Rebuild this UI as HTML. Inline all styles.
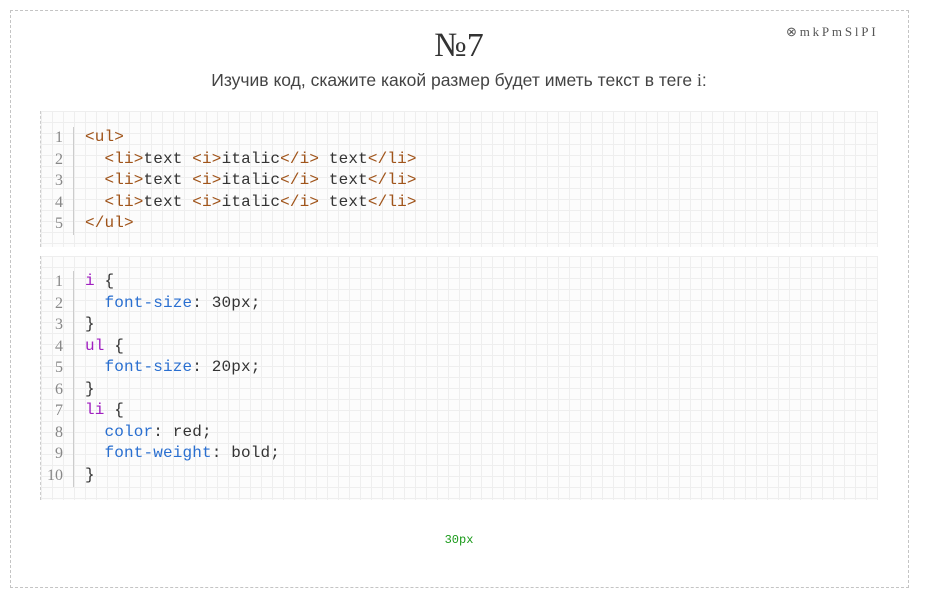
<!DOCTYPE html>
<html><head><meta charset="utf-8"><style>
html,body{margin:0;padding:0;background:#fff;}
body{width:928px;height:599px;position:relative;overflow:hidden;font-family:"Liberation Sans",sans-serif;}
.frame{position:absolute;left:10px;top:10px;width:897px;height:576px;border:1px dashed #c4c4c4;}
.num{position:absolute;left:0;width:918px;top:27px;text-align:center;font-family:"Liberation Serif",serif;font-size:34px;color:#333;}
.q{position:absolute;left:0;width:918px;top:70px;text-align:center;font-size:17.5px;color:#444;}
.id{position:absolute;left:786px;top:24px;font-family:"Liberation Serif",serif;font-size:13px;color:#555;letter-spacing:2.8px;}
.code{position:absolute;left:40px;width:837px;border-left:1px dashed #ccc;
background-color:#fcfcfc;
background-image:linear-gradient(#eee 1px,transparent 1px),linear-gradient(90deg,#eee 1px,transparent 1px);
background-size:11px 11px;font-family:"Liberation Mono",monospace;font-size:16px;letter-spacing:0.15px;}
.code .ln{position:absolute;left:0;width:32px;border-right:1px solid #ccc;text-align:right;color:#888;font-family:"Liberation Serif",serif;font-size:16px;letter-spacing:0;}
.code .ln div,.code .tx div{height:21.5px;line-height:21.5px;}
.code .ln div{padding-right:10px;}
.code .tx{position:absolute;left:44px;color:#333;white-space:pre;}
.t{color:#a0541a}.p{color:#a020c0}.b{color:#2a6fd0}
.ans{position:absolute;left:0;width:918px;top:533px;text-align:center;font-family:"Liberation Mono",monospace;font-size:12px;color:#1a9a1a;}
</style></head><body>
<div class="frame"></div>
<div class="num">№7</div>
<div class="id">⊗mkPmSlPI</div>
<div class="q">Изучив код, скажите какой размер будет иметь текст в теге <span style="font-family:'Liberation Serif',serif">i</span>:</div>
<div class="code" style="top:111px;height:136px;">
 <div class="ln" style="top:16px;height:108px;"><div>1</div><div>2</div><div>3</div><div>4</div><div>5</div></div>
 <div class="tx" style="top:16px;"><div><span class="t">&lt;ul&gt;</span></div><div>  <span class="t">&lt;li&gt;</span>text <span class="t">&lt;i&gt;</span>italic<span class="t">&lt;/i&gt;</span> text<span class="t">&lt;/li&gt;</span></div><div>  <span class="t">&lt;li&gt;</span>text <span class="t">&lt;i&gt;</span>italic<span class="t">&lt;/i&gt;</span> text<span class="t">&lt;/li&gt;</span></div><div>  <span class="t">&lt;li&gt;</span>text <span class="t">&lt;i&gt;</span>italic<span class="t">&lt;/i&gt;</span> text<span class="t">&lt;/li&gt;</span></div><div><span class="t">&lt;/ul&gt;</span></div></div>
</div>
<div class="code" style="top:256px;height:244px;">
 <div class="ln" style="top:15px;height:216px;"><div>1</div><div>2</div><div>3</div><div>4</div><div>5</div><div>6</div><div>7</div><div>8</div><div>9</div><div>10</div></div>
 <div class="tx" style="top:15px;"><div><span class="p">i</span> {</div><div>  <span class="b">font-size</span>: 30px;</div><div>}</div><div><span class="p">ul</span> {</div><div>  <span class="b">font-size</span>: 20px;</div><div>}</div><div><span class="p">li</span> {</div><div>  <span class="b">color</span>: red;</div><div>  <span class="b">font-weight</span>: bold;</div><div>}</div></div>
</div>
<div class="ans">30px</div>
</body></html>
